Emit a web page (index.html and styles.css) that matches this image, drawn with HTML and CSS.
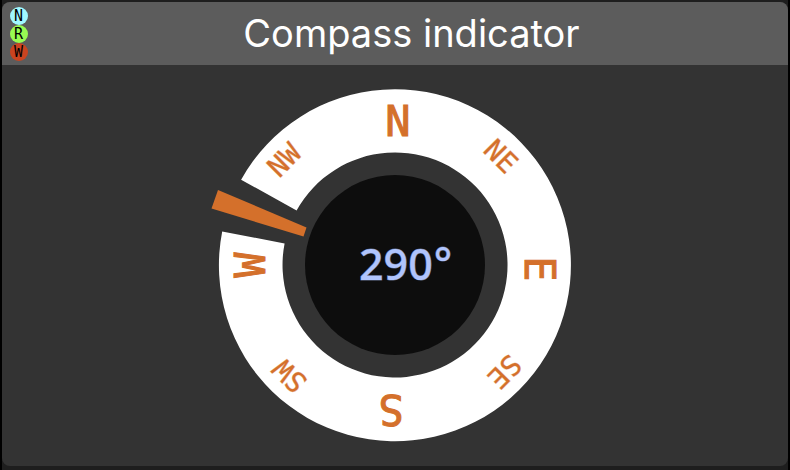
FILE: index.html
```html
<!DOCTYPE html>
<html lang="en">
<head>
<meta charset="utf-8">
<title>Compass indicator</title>
<link rel="stylesheet" href="styles.css">
</head>
<body>
<main class="panel">
  <header class="panel-header">
    <div class="flags">
      <span class="flag flag-n">N</span>
      <span class="flag flag-r">R</span>
      <span class="flag flag-w">W</span>
    </div>
    <h1 class="title">Compass indicator</h1>
  </header>
  <section class="panel-body">
    <svg class="compass" viewBox="-185 -177 370 356" role="img" aria-label="Compass heading">
      <path class="ring" d="M-153.9 -85.3A176 176 0 1 1 -172.8 -33.6L-110.4 -21.5A112.5 112.5 0 1 0 -98.4 -54.5Z"/>
      <circle class="dial" r="90"/>
      <path class="needle" d="M-177 -75L-183.5 -56.5L-91.5 -28.5L-88.5 -37.5Z"/>
      <g class="major">
        <text x="3" y="-129">N</text>
        <text x="4" y="-130" transform="rotate(90)">E</text>
        <text x="4" y="-130" transform="rotate(180)">S</text>
        <text x="0" y="-130" transform="rotate(270)">W</text>
      </g>
      <g class="minor">
        <text x="-2" y="-142" transform="rotate(45)">NE</text>
        <text x="-2" y="-143" transform="rotate(135)">SE</text>
        <text x="-4" y="-143" transform="rotate(225)">SW</text>
        <text x="-4" y="-143" transform="rotate(315)">NW</text>
      </g>
      <text class="reading" x="-36" y="15">290<tspan dx="1" dy="-1">°</tspan></text>
    </svg>
  </section>
</main>
</body>
</html>
```
FILE: styles.css
```css
* { box-sizing: border-box; }
body {
  margin: 0;
  min-height: 100vh;
  display: flex;
  background: #1e1e1e;
  border: solid #000;
  border-width: 0 2px;
}
.panel {
  flex: 1;
  display: flex;
  flex-direction: column;
  margin: 2px 0 4px;
  border-radius: 8px;
  overflow: hidden;
  background: #333;
}
.panel-header {
  display: grid;
  grid-template-columns: 33px 1fr;
  align-items: center;
  padding: 4px 0;
  background: #5c5c5c;
}
.flags {
  display: flex;
  flex-direction: column;
  align-items: center;
}
.flag {
  width: 18px;
  height: 18px;
  border-radius: 50%;
  font: 15px/18px "DejaVu Sans Mono", monospace;
  text-align: center;
  color: #000;
}
.flag-n { background: #a0f8ff; }
.flag-r { background: #98fb52; }
.flag-w { background: #cb4420; }
.title {
  margin: 0;
  font: 400 38px/55px Inter, sans-serif;
  text-align: center;
  color: #fff;
}
.panel-body {
  flex: 1;
  display: flex;
  align-items: center;
  justify-content: center;
}
.compass { width: 370px; max-width: 100%; }
.ring { fill: #fff; }
.dial { fill: #0d0d0d; }
.needle { fill: #d4702b; }
.major, .minor {
  font-family: "DejaVu Sans Mono", monospace;
  fill: #d4702b;
  stroke: #d4702b;
  stroke-width: 1;
  text-anchor: middle;
}
.major { font-size: 42px; }
.minor { font-size: 28px; stroke-opacity: 0.4; }
.reading {
  font: 500 43px "Noto Sans", sans-serif;
  fill: #b0c4fc;
  stroke: #b0c4fc;
  stroke-opacity: 0.5;
}
```
